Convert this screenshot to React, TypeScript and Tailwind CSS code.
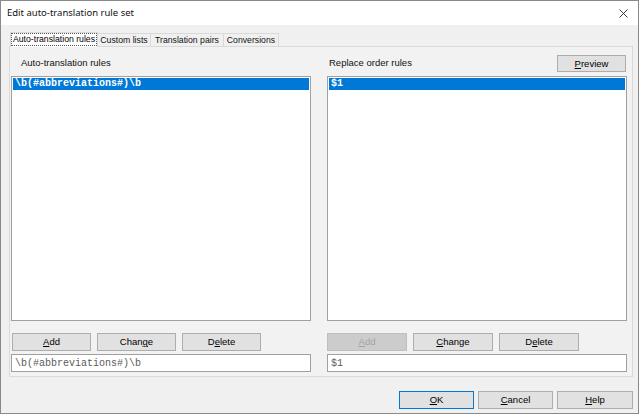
import React from 'react';

const sans = "font-['Liberation_Sans',Arial,sans-serif]";
const mono = "font-['Liberation_Mono','Courier_New',monospace]";

type BtnProps = {
  label: string;
  hot?: number;
  width: string;
  disabled?: boolean;
  focused?: boolean;
};

// classic push button with an underlined access key
function Btn({ label, hot = 0, width, disabled, focused }: BtnProps) {
  const before = label.slice(0, hot);
  const key = label.charAt(hot);
  const after = label.slice(hot + 1);
  let tone = 'bg-[#e1e1e1] border-[#adadad] text-black';
  if (disabled) tone = 'bg-[#cccccc] border-[#bfbfbf] text-[#a3a3a3]';
  if (focused) tone = 'bg-[#e1e1e1] border-[#0078d7] text-black';
  return (
    <div
      className={`${width} h-full border ${tone} ${sans} text-[9.5px] flex items-center justify-center leading-none`}
    >
      <span>
        {before}
        <span className="underline underline-offset-[1px]">{key}</span>
        {after}
      </span>
    </div>
  );
}

function ListBox({ text }: { text: string }) {
  return (
    <div className="h-[245px] bg-white border border-[#a0a0a0] p-[1px]">
      <div className={`h-[12px] bg-[#0078d7] text-white ${mono} font-bold text-[10px] leading-[12px] pl-[2px]`}>
        {text}
      </div>
    </div>
  );
}

function EditBox({ text }: { text: string }) {
  return (
    <div className={`h-[18px] mt-[3px] bg-white border border-[#a0a0a0] ${mono} text-[10px] text-[#5a5a5a] flex items-center pl-[3px]`}>
      {text}
    </div>
  );
}

const tabs = ['Custom lists', 'Translation pairs', 'Conversions'];
const tabWidths = ['w-[53px]', 'w-[73px]', 'w-[55px]'];

export default function App() {
  const rule = '\\b(#abbreviations#)\\b';
  return (
    <div className="w-[639px] h-[414px] border border-[#8a8a8a] bg-[#f0f0f0] flex flex-col overflow-hidden">
      {/* title bar */}
      <div className="h-[24px] bg-white flex items-center justify-between pl-[6px] pr-[10px]">
        <span className="font-['Noto_Sans',sans-serif] text-[9.5px] text-[#111]">Edit auto-translation rule set</span>
        <svg width="9" height="9" viewBox="0 0 9 9" className="mt-[1px]">
          <path d="M0.5 0.5 L8.5 8.5 M8.5 0.5 L0.5 8.5" stroke="#222" strokeWidth="0.9" fill="none" />
        </svg>
      </div>

      {/* tab strip */}
      <div className={`flex items-end pl-[9px] pt-[6px] h-[21px] ${sans} text-[8.7px] leading-none whitespace-nowrap`}>
        <div className="w-[88px] h-[15px] bg-white border border-b-0 border-[#d9d9d9] flex items-center justify-center relative z-10 -mb-px pb-px">
          <span className="border border-dotted border-[#555] px-[1px] py-[1px] whitespace-nowrap">Auto-translation rules</span>
        </div>
        {tabs.map((t, i) => (
          <div
            key={t}
            className={`${tabWidths[i]} h-[13px] bg-[#f0f0f0] border border-b-0 border-l-0 border-[#d9d9d9] flex items-center justify-center text-[#111]`}
          >
            {t}
          </div>
        ))}
      </div>

      {/* tab page */}
      <div className="ml-[8px] w-[624px] h-[331px] border border-[#dadada] bg-[#f2f2f2] pt-[8px] pl-[1px] flex gap-[16px]">
        <div className="w-[300px] flex flex-col">
          <div className={`h-[17px] flex items-center pl-[10px] ${sans} text-[9.5px] text-[#111]`}>
            Auto-translation rules
          </div>
          <div className="mt-[4px]">
            <ListBox text={rule} />
          </div>
          <div className="mt-[12px] h-[18px] flex gap-[6px] pl-[1px]">
            <Btn label="Add" width="w-[79px]" />
            <Btn label="Change" hot={4} width="w-[79px]" />
            <Btn label="Delete" hot={1} width="w-[79px]" />
          </div>
          <EditBox text={rule} />
        </div>

        <div className="w-[300px] flex flex-col">
          <div className={`h-[17px] flex items-center justify-between pl-[2px] pr-[1px] ${sans} text-[9.5px] text-[#111]`}>
            <span>Replace order rules</span>
            <Btn label="Preview" width="w-[69px]" />
          </div>
          <div className="mt-[4px]">
            <ListBox text="$1" />
          </div>
          <div className="mt-[12px] h-[18px] flex gap-[6px]">
            <Btn label="Add" width="w-[80px]" disabled />
            <Btn label="Change" width="w-[80px]" />
            <Btn label="Delete" hot={1} width="w-[80px]" />
          </div>
          <EditBox text="$1" />
        </div>
      </div>

      {/* dialog buttons */}
      <div className="mt-[14px] h-[18px] flex justify-end gap-[4px] pr-[5px]">
        <Btn label="OK" width="w-[75px]" focused />
        <Btn label="Cancel" width="w-[75px]" />
        <Btn label="Help" width="w-[76px]" />
      </div>
    </div>
  );
}
